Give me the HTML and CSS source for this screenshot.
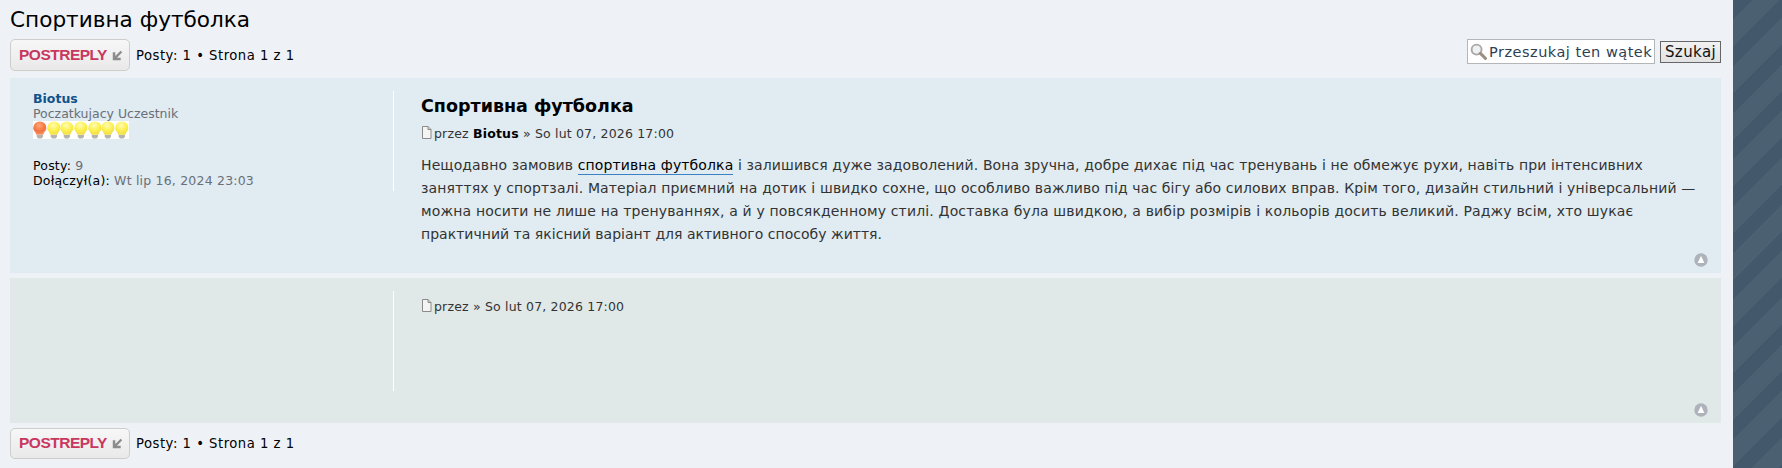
FILE: index.html
```html
<!DOCTYPE html>
<html lang="pl">
<head>
<meta charset="utf-8">
<title>Спортивна футболка</title>
<link rel="stylesheet" href="styles.css">
</head>
<body>
<svg class="defs" width="0" height="0" aria-hidden="true">
  <defs>
    <radialGradient id="bulbY" cx="0.45" cy="0.3" r="0.75"><stop offset="0" stop-color="#fffbb8"/><stop offset="0.55" stop-color="#fdf04a"/><stop offset="1" stop-color="#ecd94c"/></radialGradient>
    <radialGradient id="bulbR" cx="0.45" cy="0.3" r="0.75"><stop offset="0" stop-color="#ffa878"/><stop offset="0.6" stop-color="#f4723f"/><stop offset="1" stop-color="#f09a74"/></radialGradient>
    <symbol id="bulb-y" viewBox="0 0 14 18"><path d="M7 .2a6.800 6.800 0 0 1 6.800 6.800c0 2.800-2.500 3.700-3.200 6.800H3.400C2.700 10.700.2 9.800.2 7A6.800 6.800 0 0 1 7 .2z" fill="url(#bulbY)"/><path d="M3.800 14h6.400v1.800L8.800 17.800H5.200L3.800 15.800z" fill="#b4b4ac"/></symbol>
    <symbol id="bulb-r" viewBox="0 0 14 18"><path d="M7 .2a6.800 6.800 0 0 1 6.800 6.800c0 2.800-2.500 3.700-3.200 6.800H3.400C2.700 10.700.2 9.800.2 7A6.800 6.800 0 0 1 7 .2z" fill="url(#bulbR)"/><path d="M3.800 14h6.400v1.800L8.800 17.800H5.200L3.800 15.800z" fill="#b4b4ac"/></symbol>
    <symbol id="doc" viewBox="0 0 11 13"><path d="M1.500.5h5.500l3 3v9h-8.500z" fill="#f4f4f2" stroke="#8a8a8a"/><path d="M7 .5v3h3" fill="#d0d0d0" stroke="#8a8a8a"/></symbol>
    <symbol id="top" viewBox="0 0 14 14"><circle cx="7" cy="7" r="6.700" fill="#aeb2ba"/><path d="M7 2.800 10.400 10H3.600z" fill="#fff"/></symbol>
    <symbol id="arrow" viewBox="0 0 11 11"><path d="M10.200 2.300 8.600.7 3.300 6V2.300H.8V10.200h7.900V7.700H5z" fill="#8c8c8c"/></symbol>
  </defs>
</svg>
<main class="page">
  <h2 class="topic-title">Спортивна футболка</h2>
  <div class="action-bar">
    <a class="reply-btn"><span>POSTREPLY</span><svg class="reply-icon"><use href="#arrow"/></svg></a>
    <span class="pagination">Posty: 1 • Strona 1 z 1</span>
    <form class="search">
      <label class="search-box">
        <svg class="search-icon" viewBox="0 0 16 16"><circle cx="6.200" cy="6.200" r="4.700" fill="#eef0f2" stroke="#a8a8a8" stroke-width="1.800"/><path d="m9.800 9.800 4.700 4.700" stroke="#9a8f80" stroke-width="2.800" stroke-linecap="round"/></svg>
        <span>Przeszukaj ten wątek</span>
      </label>
      <button class="search-btn" type="button">Szukaj</button>
    </form>
  </div>

  <article class="post post-blue">
    <div class="profile">
      <a class="author">Biotus</a>
      <div class="rank">Poczatkujacy Uczestnik</div>
      <div class="bulbs">
        <svg><use href="#bulb-r"/></svg><svg><use href="#bulb-y"/></svg><svg><use href="#bulb-y"/></svg><svg><use href="#bulb-y"/></svg><svg><use href="#bulb-y"/></svg><svg><use href="#bulb-y"/></svg><svg><use href="#bulb-y"/></svg>
      </div>
      <div class="stat stat-first"><b>Posty:</b> 9</div>
      <div class="stat"><b>Dołączył(a):</b> Wt lip 16, 2024 23:03</div>
    </div>
    <div class="postbody">
      <h3 class="post-title">Спортивна футболка</h3>
      <p class="meta"><svg class="doc"><use href="#doc"/></svg>przez <strong>Biotus</strong> » So lut 07, 2026 17:00</p>
      <div class="content">
        <p class="line line-1">Нещодавно замовив <a class="inline-link">спортивна футболка</a> і залишився дуже задоволений. Вона зручна, добре дихає під час тренувань і не обмежує рухи, навіть при інтенсивних</p>
        <p class="line line-2">заняттях у спортзалі. Матеріал приємний на дотик і швидко сохне, що особливо важливо під час бігу або силових вправ. Крім того, дизайн стильний і універсальний —</p>
        <p class="line line-3">можна носити не лише на тренуваннях, а й у повсякденному стилі. Доставка була швидкою, а вибір розмірів і кольорів досить великий. Раджу всім, хто шукає</p>
        <p class="line line-4">практичний та якісний варіант для активного способу життя.</p>
      </div>
    </div>
    <svg class="back-top"><use href="#top"/></svg>
  </article>

  <article class="post post-green">
    <div class="profile"></div>
    <div class="postbody">
      <p class="meta meta-solo"><svg class="doc"><use href="#doc"/></svg>przez » So lut 07, 2026 17:00</p>
    </div>
    <svg class="back-top"><use href="#top"/></svg>
  </article>

  <div class="action-bar action-bottom">
    <a class="reply-btn"><span>POSTREPLY</span><svg class="reply-icon"><use href="#arrow"/></svg></a>
    <span class="pagination">Posty: 1 • Strona 1 z 1</span>
  </div>
</main>
<aside class="stripes"></aside>
</body>
</html>
```
FILE: styles.css
```css
* { box-sizing: border-box; }
html, body { height: 100%; }
body {
  margin: 0;
  display: flex;
  height: 468px;
  overflow: hidden;
  background: #eef2f6;
  font-family: "DejaVu Sans", Verdana, sans-serif;
  color: #111;
}
.defs { position: absolute; }
.page {
  width: 1733px;
  flex: none;
  padding: 0 12px 0 10px;
  background: #eef2f6;
}
.stripes {
  flex: 1;
  background: repeating-linear-gradient(135deg, #43586a 0 14px, #4b6070 14px 33px);
}
.topic-title {
  margin: 0;
  height: 39px;
  padding-top: 5px;
  font-size: 21.6px;
  line-height: 30px;
  font-weight: 400;
  color: #000;
}
.action-bar {
  display: flex;
  align-items: center;
  height: 32px;
  margin-bottom: 7px;
}
.reply-btn {
  display: flex;
  align-items: center;
  width: 120px;
  height: 32px;
  padding-left: 8px;
  border: 1px solid #cdcdc9;
  border-radius: 5px;
  background: linear-gradient(#f7f7f7, #e9e9e9);
  font-family: "Liberation Sans", Arial, sans-serif;
  font-size: 15.5px;
  font-weight: 700;
  letter-spacing: -0.5px;
  color: #c8375f;
}
.reply-icon { width: 11px; height: 11px; margin-left: 5px; }
.pagination {
  margin-left: 6px;
  font-size: 13.200px;
  letter-spacing: 0.5px;
  color: #000;
}
.search {
  margin-left: auto;
  align-self: flex-start;
  display: flex;
  align-items: flex-start;
  gap: 5px;
}
.search-box {
  display: flex;
  align-items: center;
  width: 188px;
  height: 25px;
  padding-left: 2px;
  gap: 2px;
  border: 1px solid #b4b6ba;
  background: #fff;
  font-size: 14.500px;
  letter-spacing: 0.5px;
  color: #2d3f55;
  white-space: nowrap;
  overflow: hidden;
}
.search-icon { width: 17px; height: 17px; flex: none; }
.search-btn {
  width: 61px;
  height: 22px;
  margin-top: 2px;
  padding: 0;
  border: 1px solid #666;
  background: linear-gradient(#f2f2f2, #e2e2e2);
  font: 15px "DejaVu Sans", Verdana, sans-serif;
  letter-spacing: 0.4px;
  color: #111;
}
.post {
  position: relative;
  display: flex;
  margin-bottom: 5px;
  padding-top: 13px;
}
.post-blue { height: 195px; background: #e0ebf2; }
.post-green { height: 145px; background: #e1e9e8; }
.profile {
  width: 384px;
  flex: none;
  padding-left: 23px;
  border-right: 1px solid #fff;
  font-size: 12.500px;
  line-height: 15px;
  color: #6a6f78;
  height: 100px;
}
.author { display: block; font-weight: 700; color: #105289; }
.rank { line-height: 15px; }
.bulbs {
  display: flex;
  width: 96px;
  height: 18px;
  background: #fff;
}
.bulbs svg { width: 13.700px; height: 18px; flex: none; }
.stat { line-height: 15px; letter-spacing: 0.2px; }
.stat b { font-weight: 400; color: #000; }
.stat-first { margin-top: 19px; }
.postbody { padding-left: 27px; flex: 1; }
.post-title {
  margin: 3px 0 0;
  font-size: 17.500px;
  line-height: 24px;
  font-weight: 700;
  color: #000;
}
.meta {
  margin: 8px 0 0;
  font-size: 12.500px;
  letter-spacing: 0.18px;
  line-height: 15px;
  color: #333;
  white-space: nowrap;
}
.meta strong { color: #000; }
.meta-solo { margin-top: 8px; }
.doc { width: 11px; height: 13px; margin-right: 2px; vertical-align: -1px; }
.content {
  margin: 13px 0 0;
  font-size: 14px;
  line-height: 23px;
  color: #333;
  white-space: nowrap;
}
.line { margin: 0; }
.line-1 { letter-spacing: 0.11px; }
.line-2 { letter-spacing: 0.13px; }
.line-3 { letter-spacing: 0.16px; }
.line-4 { letter-spacing: 0.02px; }
.inline-link { color: #000; border-bottom: 1px solid #3b82c4; padding-bottom: 1px; }
.back-top {
  position: absolute;
  right: 13px;
  bottom: 6px;
  width: 14px;
  height: 14px;
}
.action-bottom { margin: 0; height: 30px; }
.action-bottom .reply-btn { height: 31px; }
```
